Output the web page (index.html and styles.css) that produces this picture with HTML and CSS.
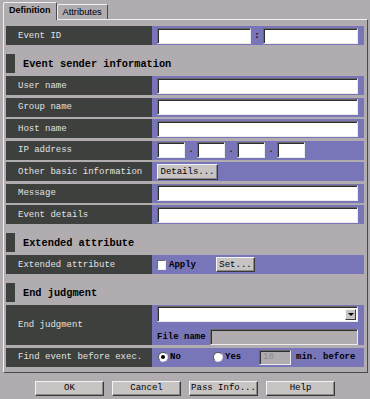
FILE: index.html
```html
<!DOCTYPE html>
<html lang="en">
<head>
  <meta charset="UTF-8" />
  <title>Event condition</title>
  <link rel="stylesheet" href="styles.css">
</head>
<body>
  <div class="tabs">
    <div class="tab active">Definition</div>
    <div class="tab">Attributes</div>
  </div>

  <div class="panel">
    <div class="row first">
      <div class="label">Event ID</div>
      <div class="value">
        <input class="field id-a" type="text">
        <span class="colon">:</span>
        <input class="field id-b" type="text">
      </div>
    </div>

    <div class="sec">Event sender information</div>
    <div class="row">
      <div class="label">User name</div>
      <div class="value"><input class="field wide" type="text"></div>
    </div>
    <div class="row">
      <div class="label">Group name</div>
      <div class="value"><input class="field wide" type="text"></div>
    </div>
    <div class="row">
      <div class="label">Host name</div>
      <div class="value"><input class="field wide" type="text"></div>
    </div>
    <div class="row">
      <div class="label">IP address</div>
      <div class="value">
        <input class="field ip" type="text"><span class="dot">.</span>
        <input class="field ip" type="text"><span class="dot">.</span>
        <input class="field ip" type="text"><span class="dot">.</span>
        <input class="field ip" type="text">
      </div>
    </div>
    <div class="row">
      <div class="label">Other basic information</div>
      <div class="value"><button class="btn details">Details...</button></div>
    </div>
    <div class="row">
      <div class="label">Message</div>
      <div class="value"><input class="field wide" type="text"></div>
    </div>
    <div class="row">
      <div class="label">Event details</div>
      <div class="value"><input class="field wide" type="text"></div>
    </div>

    <div class="sec">Extended attribute</div>
    <div class="row">
      <div class="label">Extended attribute</div>
      <div class="value">
        <input class="check" type="checkbox"><span class="opt">Apply</span>
        <button class="btn set">Set...</button>
      </div>
    </div>

    <div class="sec">End judgment</div>
    <div class="row tall">
      <div class="label">End judgment</div>
      <div class="value stack">
        <div class="select"><span class="arrow"></span></div>
        <div class="file-line">
          <span class="opt">File name</span>
          <input class="field grey" type="text" disabled>
        </div>
      </div>
    </div>
    <div class="row">
      <div class="label">Find event before exec.</div>
      <div class="value">
        <input class="radio" type="radio" name="find" checked><span class="opt no">No</span>
        <input class="radio" type="radio" name="find"><span class="opt yes">Yes</span>
        <input class="field mins" type="text" value="10" disabled>
        <span class="opt">min. before</span>
      </div>
    </div>
  </div>

  <div class="actions">
    <button class="btn big">OK</button>
    <button class="btn big">Cancel</button>
    <button class="btn big">Pass Info...</button>
    <button class="btn big">Help</button>
  </div>
</body>
</html>
```

FILE: styles.css
```css
:root {
  --bg: #b0acb0;
  --dark: #3d403d;
  --purple: #7876b8;
  --light-text: #e2e2e2;
  --hi: #f0f0f0;
  --lo: #4a4a4a;
}

body {
  margin: 0;
  background: var(--bg);
  font-family: "Liberation Mono", "DejaVu Sans Mono", monospace;
  font-size: 9px;
  color: #000;
}

/* Tabs */
.tabs {
  display: flex;
  align-items: flex-end;
  height: 16px;
  padding: 3px 0 0 3px;
}

.tab {
  font-family: "Liberation Sans", Arial, sans-serif;
  font-size: 9.3px;
  height: 14px;
  line-height: 14px;
  padding: 0 5px;
  border: 1px solid var(--hi);
  border-right-color: var(--lo);
  border-bottom: none;
  border-radius: 2px 2px 0 0;
}

.tab.active {
  position: relative;
  z-index: 1;
  font-weight: bold;
  font-size: 9px;
  height: 17px;
  line-height: 15px;
  margin-bottom: -1px;
  padding: 0 5px 0 5px;
  background: var(--bg);
}

/* Panel */
.panel {
  margin: 0 2px 0 3px;
  border: 1px solid var(--hi);
  border-right-color: var(--lo);
  border-bottom-color: var(--lo);
  padding: 6px 3px 5px 2px;
}

.row {
  display: flex;
  height: 19px;
  margin-top: 2.5px;
}

.row.first {
  margin-top: 0;
}

.row.tall {
  height: 40px;
}

.label {
  width: 134px;
  flex-shrink: 0;
  background: var(--dark);
  color: var(--light-text);
  padding-left: 12px;
  display: flex;
  align-items: center;
}

.value {
  flex: 1;
  min-width: 0;
  background: var(--purple);
  padding: 0 6px 0 5px;
  display: flex;
  align-items: center;
}

.value.stack {
  flex-direction: column;
  align-items: stretch;
  justify-content: space-between;
  padding-top: 1px;
  padding-bottom: 0;
}

.sec {
  display: flex;
  align-items: center;
  gap: 8px;
  height: 19px;
  margin: 9px 0 3px;
  font-weight: bold;
  font-size: 10.3px;
}

.sec::before {
  content: "";
  width: 9px;
  height: 100%;
  background: var(--dark);
}

.sec + .row {
  margin-top: 0;
}

/* Fields */
.field {
  box-sizing: border-box;
  height: 16px;
  min-width: 0;
  margin: 0;
  padding: 0 3px;
  background: #fff;
  border: 1px solid;
  border-color: #6a6a6a #ececec #ececec #6a6a6a;
  box-shadow: inset 1px 1px 0 #2e2e2e;
  font: inherit;
  outline: none;
}

.field.wide { flex: 1; width: 0; }
.field.id-a { width: 94px; flex-shrink: 0; }
.field.id-b { flex: 1; width: 0; }

.colon {
  width: 12px;
  flex-shrink: 0;
  text-align: center;
  font-weight: bold;
}

.field.ip { width: 28px; }

.dot {
  width: 12px;
  text-align: center;
}

.field.grey {
  flex: 1;
  width: 0;
  background: var(--bg);
  height: 16px;
}

.field.mins {
  width: 32px;
  height: 15px;
  background: var(--bg);
  color: #8a8a8a;
  margin-right: 5px;
}

.select {
  height: 16px;
  box-sizing: border-box;
  background: #fff;
  border: 1px solid;
  border-color: #6a6a6a #ececec #ececec #6a6a6a;
  box-shadow: inset 1px 1px 0 #2e2e2e;
  display: flex;
  justify-content: flex-end;
  align-items: center;
  padding-right: 1px;
}

.arrow {
  width: 11px;
  height: 11px;
  box-sizing: border-box;
  background: #c8c4c4;
  border: 1px solid;
  border-color: #f4f4f4 #3a3a3a #3a3a3a #f4f4f4;
  position: relative;
}

.arrow::after {
  content: "";
  position: absolute;
  left: 2px;
  top: 3px;
  border-left: 3px solid transparent;
  border-right: 3px solid transparent;
  border-top: 3px solid #000;
}

.file-line {
  display: flex;
  align-items: center;
  gap: 4px;
  height: 16px;
}

.opt {
  font-weight: bold;
}

/* Checkbox and radios */
.check {
  appearance: none;
  width: 9px;
  height: 10px;
  margin: 0 3px 0 0;
  background: #fff;
  border: 1px solid;
  border-color: #6a6a6a #ececec #ececec #6a6a6a;
}

.radio {
  appearance: none;
  width: 10px;
  height: 10px;
  margin: 0 2px 0 1px;
  border-radius: 50%;
  background: #fff;
  border: 1px solid;
  border-color: #555 #ddd #ddd #555;
  position: relative;
}

.radio:checked::after {
  content: "";
  position: absolute;
  left: 2px;
  top: 2px;
  width: 4px;
  height: 4px;
  border-radius: 50%;
  background: #000;
}

.opt.no { width: 42px; }
.opt.yes { width: 34px; }

/* Buttons */
.btn {
  box-sizing: border-box;
  margin: 0;
  padding: 0;
  background: #c8c4c4;
  border: 1px solid;
  border-color: #f4f4f4 #3a3a3a #3a3a3a #f4f4f4;
  box-shadow: inset -1px -1px 0 #8a8888;
  font: inherit;
  color: #000;
  cursor: pointer;
}

.btn.details {
  width: 61px;
  height: 16px;
}

.btn.set {
  width: 39px;
  height: 15px;
  margin-left: 20px;
}

.actions {
  display: flex;
  justify-content: center;
  gap: 8px;
  margin-top: 8px;
}

.btn.big {
  width: 69px;
  height: 15px;
}
```
